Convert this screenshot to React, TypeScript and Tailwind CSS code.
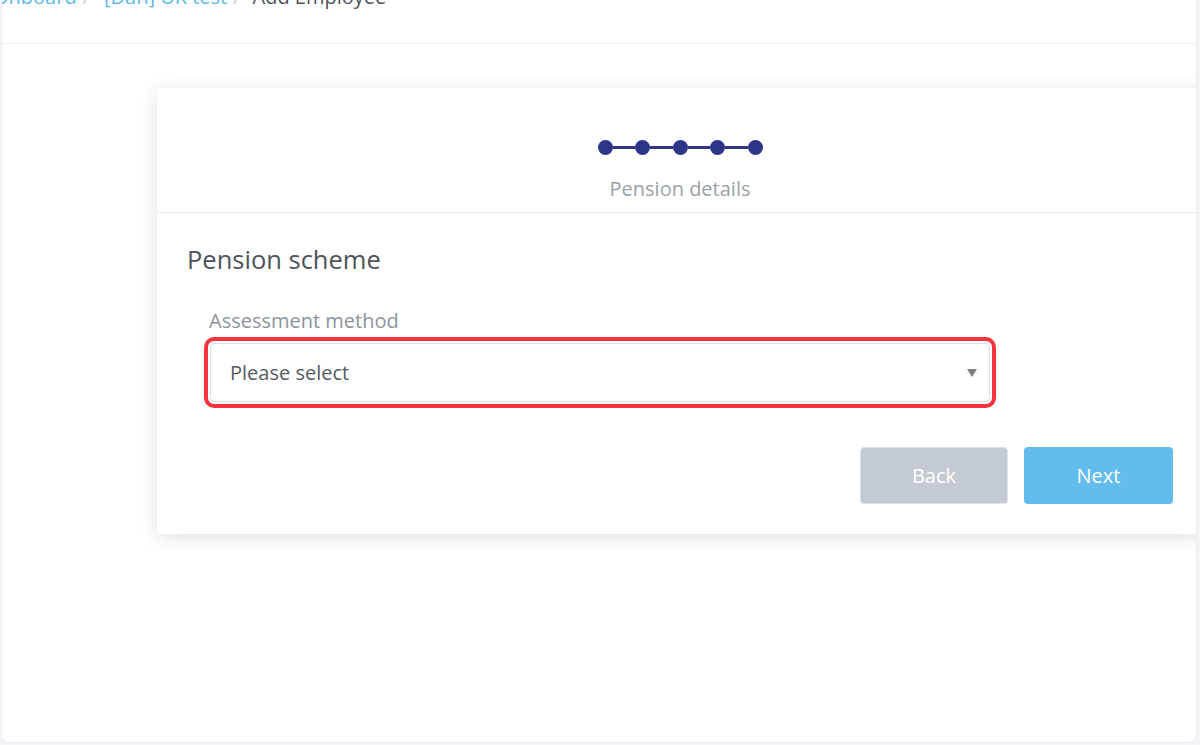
import React from 'react'

const font = { fontFamily: '"Open Sans", Lato, sans-serif' }

const Stepper: React.FC<{ steps: number }> = ({ steps }) => (
  <div className="flex items-center">
    {Array.from({ length: steps }).map((_, i) => (
      <React.Fragment key={i}>
        {i > 0 && <div className="h-[3px] w-[22.5px] bg-[#2c3587]" />}
        <div className="h-[15px] w-[15px] rounded-full bg-[#2c3587]" />
      </React.Fragment>
    ))}
  </div>
)

export default function App() {
  return (
    <div className="w-[1200px] h-[745px] bg-[#f4f4f8] pl-[1px] pr-[3px] pb-[2px] overflow-hidden" style={font}>
      <div className="h-full bg-white border-x border-b border-[#ebebf1] rounded-b-[8px] overflow-hidden">
        {/* breadcrumb */}
        <div className="flex items-start h-[44px] border-b border-[#f1f1f4]">
          <div className="-mt-[15px] -ml-[9px] flex items-center text-[20px] leading-[24px] whitespace-nowrap">
            <span className="text-[#5cb9e8]">Onboard</span>
            <span className="ml-[6px] mr-[14px] text-[#c9cdd2]">/</span>
            <span className="text-[#5cb9e8]">[Dan] UK test</span>
            <span className="ml-[6px] mr-[12px] text-[#c9cdd2]">/</span>
            <span className="text-[#4d535b]">Add Employee</span>
          </div>
        </div>

        <div className="pt-[44px] pl-[155px]">
          <div className="w-[1046px] bg-white rounded-l-[4px] shadow-[0_3px_18px_rgba(0,0,0,0.13)]">
            <div className="flex flex-col items-center pt-[52px] pb-[10px] border-b border-[#e6e7ea]">
              <Stepper steps={5} />
              <div className="mt-[21px] text-[20px] leading-[26px] text-[#9aa1a9]">Pension details</div>
            </div>

            <div className="pt-[29px] pl-[30px] pr-[30px] pb-[30px]">
              <h2 className="text-[25.5px] leading-[34px] font-medium text-[#4d535b]">Pension scheme</h2>

              <div className="mt-[32px] pl-[17px]">
                <div className="pl-[5px] text-[20px] leading-[26px] text-[#8d939b]">Assessment method</div>
                <div className="mt-[3px] w-[792px] rounded-[10px] border-4 border-[#f5343f] p-[2px]">
                  <div className="flex h-[59px] items-center justify-between rounded-[4px] border border-[#dcdfe3] pl-[19px] pr-[12px]">
                    <span className="text-[20px] text-[#555b62]">Please select</span>
                    <svg width="10" height="8" viewBox="0 0 10 8">
                      <path d="M0 0 H10 L5 8 Z" fill="#7b7f84" />
                    </svg>
                  </div>
                </div>
              </div>

              <div className="mt-[39px] flex justify-end gap-[16px]">
                <button className="h-[57px] w-[148px] rounded-[4px] border border-[#dfe2e6] bg-[#c4cad2] text-[20px] text-white">
                  Back
                </button>
                <button className="h-[57px] w-[149px] rounded-[4px] bg-[#62bdec] text-[20px] text-white">
                  Next
                </button>
              </div>
            </div>
          </div>
        </div>
      </div>
    </div>
  )
}
